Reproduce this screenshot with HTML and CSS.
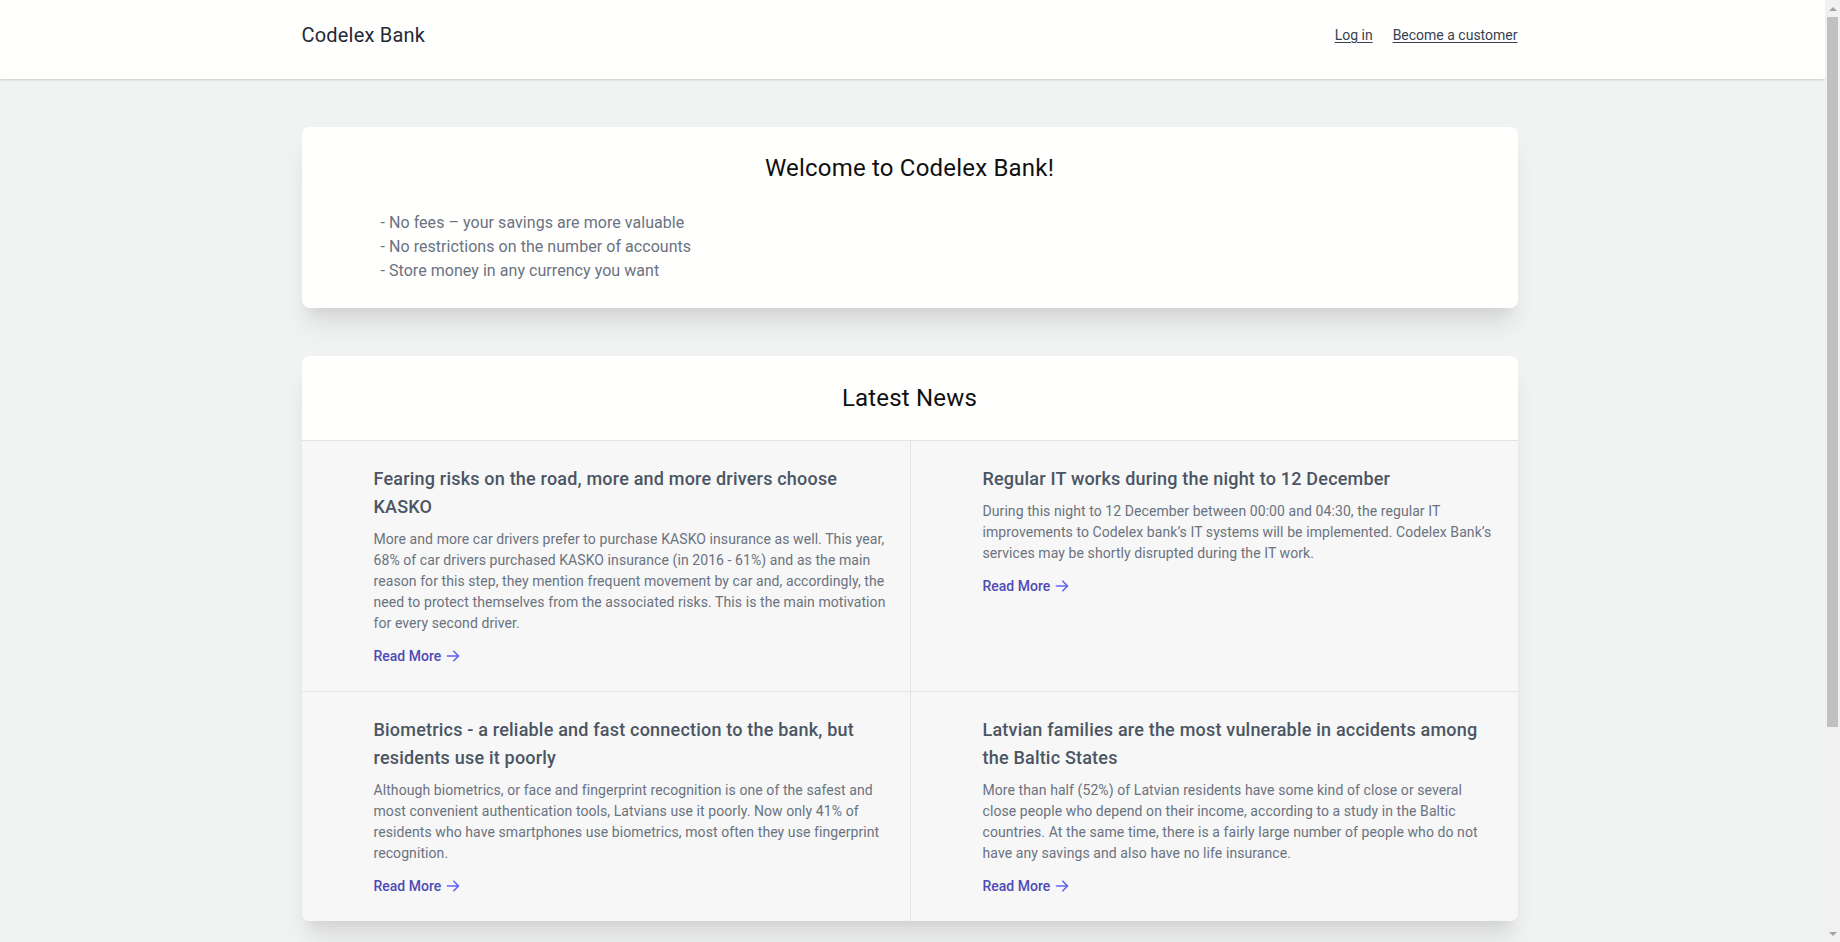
FILE: index.html
```html
<!DOCTYPE html>
<html lang="en">
<head>
<meta charset="utf-8">
<title>Codelex Bank</title>
<link rel="stylesheet" href="styles.css">
</head>
<body>
<div class="page">
<header class="topbar">
  <div class="container nav">
    <a class="brand" href="#">Codelex Bank</a>
    <div class="nav-links">
      <a href="#">Log in</a>
      <a href="#">Become a customer</a>
    </div>
  </div>
</header>

<main class="container main">
  <section class="card welcome">
    <h1 class="card-title">Welcome to Codelex Bank!</h1>
    <ul class="perks">
      <li>- No fees – your savings are more valuable</li>
      <li>- No restrictions on the number of accounts</li>
      <li>- Store money in any currency you want</li>
    </ul>
  </section>

  <section class="card news">
    <h2 class="card-title news-head">Latest News</h2>
    <div class="news-grid">
      <article class="news-item">
        <h3 class="news-title">Fearing risks on the road, more and more drivers choose KASKO</h3>
        <p class="news-text">More and more car drivers prefer to purchase KASKO insurance as well. This year, 68% of car drivers purchased KASKO insurance (in 2016 - 61%) and as the main reason for this step, they mention frequent movement by car and, accordingly, the need to protect themselves from the associated risks. This is the main motivation for every second driver.</p>
        <a class="read-more" href="#">Read More <svg viewBox="0 0 20 20" class="arrow"><path fill-rule="evenodd" clip-rule="evenodd" d="M10.293 3.293a1 1 0 011.414 0l6 6a1 1 0 010 1.414l-6 6a1 1 0 01-1.414-1.414L14.586 11H3a1 1 0 110-2h11.586l-4.293-4.293a1 1 0 010-1.414z"/></svg></a>
      </article>
      <article class="news-item right">
        <h3 class="news-title">Regular IT works during the night to 12 December</h3>
        <p class="news-text">During this night to 12 December between 00:00 and 04:30, the regular IT improvements to Codelex bank’s IT systems will be implemented. Codelex Bank’s services may be shortly disrupted during the IT work.</p>
        <a class="read-more" href="#">Read More <svg viewBox="0 0 20 20" class="arrow"><path fill-rule="evenodd" clip-rule="evenodd" d="M10.293 3.293a1 1 0 011.414 0l6 6a1 1 0 010 1.414l-6 6a1 1 0 01-1.414-1.414L14.586 11H3a1 1 0 110-2h11.586l-4.293-4.293a1 1 0 010-1.414z"/></svg></a>
      </article>
      <article class="news-item">
        <h3 class="news-title">Biometrics - a reliable and fast connection to the bank, but residents use it poorly</h3>
        <p class="news-text">Although biometrics, or face and fingerprint recognition is one of the safest and most convenient authentication tools, Latvians use it poorly. Now only 41% of residents who have smartphones use biometrics, most often they use fingerprint recognition.</p>
        <a class="read-more" href="#">Read More <svg viewBox="0 0 20 20" class="arrow"><path fill-rule="evenodd" clip-rule="evenodd" d="M10.293 3.293a1 1 0 011.414 0l6 6a1 1 0 010 1.414l-6 6a1 1 0 01-1.414-1.414L14.586 11H3a1 1 0 110-2h11.586l-4.293-4.293a1 1 0 010-1.414z"/></svg></a>
      </article>
      <article class="news-item right">
        <h3 class="news-title">Latvian families are the most vulnerable in accidents among the Baltic States</h3>
        <p class="news-text">More than half (52%) of Latvian residents have some kind of close or several close people who depend on their income, according to a study in the Baltic countries. At the same time, there is a fairly large number of people who do not have any savings and also have no life insurance.</p>
        <a class="read-more" href="#">Read More <svg viewBox="0 0 20 20" class="arrow"><path fill-rule="evenodd" clip-rule="evenodd" d="M10.293 3.293a1 1 0 011.414 0l6 6a1 1 0 010 1.414l-6 6a1 1 0 01-1.414-1.414L14.586 11H3a1 1 0 110-2h11.586l-4.293-4.293a1 1 0 010-1.414z"/></svg></a>
      </article>
    </div>
  </section>
</main>
</div>

<div class="scrollbar" aria-hidden="true">
  <div class="sb-btn sb-up"></div>
  <div class="sb-track"><div class="sb-thumb"></div></div>
  <div class="sb-btn sb-down"></div>
</div>
</body>
</html>
```
FILE: styles.css
```css
* { box-sizing: border-box; }
html, body { margin: 0; padding: 0; }
body {
  background: #f1f2f2;
  font-family: Roboto, "Noto Sans", sans-serif;
  color: #1f2937;
  -webkit-font-smoothing: antialiased;
}
.page {
  margin-right: 15px;
}
.container {
  max-width: 1280px;
  margin: 0 auto;
  padding: 0 35px 0 29px;
}
.topbar {
  background: #fffffd;
  height: 79px;
  box-shadow: 0 1px 3px 0 rgba(0,0,0,.1), 0 1px 2px 0 rgba(0,0,0,.06);
  position: relative;
}
.nav {
  height: 70px;
  display: flex;
  align-items: center;
  justify-content: space-between;
}
.brand {
  font-size: 20px;
  line-height: 28px;
  color: #1f2937;
  text-decoration: none;
  letter-spacing: 0.2px;
}
.nav-links { display: flex; gap: 20px; }
.nav-links a {
  font-size: 14px;
  line-height: 20px;
  color: #374151;
  text-decoration: underline;
  text-underline-offset: 2px;
}
.main {
  padding-top: 48px;
  padding-bottom: 48px;
}
.card {
  background: #fffffd;
  border-radius: 8px;
  overflow: hidden;
  box-shadow: 0 20px 25px -5px rgba(0,0,0,.1), 0 10px 10px -5px rgba(0,0,0,.04);
}
.card-title {
  margin: 0;
  font-size: 24px;
  line-height: 32px;
  font-weight: 400;
  color: #111;
  text-align: center;
  letter-spacing: 0.2px;
}
.welcome {
  padding: 25px 24px 25px;
  margin-bottom: 48px;
}
.perks {
  list-style: none;
  margin: 27px 0 0;
  padding: 0 0 0 55px;
}
.perks li {
  font-size: 16px;
  line-height: 24px;
  color: #6b7280;
  letter-spacing: 0.05px;
}
.news-head {
  padding: 26px 24px;
}
.news-grid {
  display: grid;
  grid-template-columns: 1fr 1fr;
  background: #f6f7f6;
}
.news-item {
  border-top: 1px solid #e3e5e5;
  padding: 24px 24px 25px 72px;
  display: flex;
  flex-direction: column;
  align-items: flex-start;
}
.news-item.right { border-left: 1px solid #e3e5e5; }
.news-title {
  margin: 0;
  font-size: 18px;
  line-height: 28px;
  font-weight: 500;
  color: #4b5563;
  letter-spacing: 0.2px;
}
.news-text {
  margin: 8px 0 0;
  font-size: 14px;
  line-height: 21px;
  color: #6b7280;
  letter-spacing: 0.08px;
}
.read-more {
  margin-top: 12px;
  display: inline-flex;
  align-items: center;
  font-size: 14px;
  line-height: 20px;
  font-weight: 500;
  color: #4f4ab5;
  text-decoration: none;
}
.arrow {
  width: 16px;
  height: 16px;
  margin-left: 4px;
  fill: #6366f1;
}

/* classic browser scrollbar drawn over the right edge */
.scrollbar {
  position: fixed;
  top: 0;
  right: 0;
  bottom: 0;
  width: 15px;
  background: #f1f1f1;
  display: flex;
  flex-direction: column;
}
.sb-btn {
  height: 17px;
  flex: none;
  display: flex;
  align-items: center;
  justify-content: center;
}
.sb-up::before, .sb-down::before {
  content: "";
  width: 0;
  height: 0;
  border-left: 4px solid transparent;
  border-right: 4px solid transparent;
}
.sb-up::before { border-bottom: 4px solid #a3a3a3; }
.sb-down::before { border-top: 4px solid #a3a3a3; }
.sb-track {
  flex: 1;
  padding: 0 2px;
}
.sb-thumb {
  height: 710px;
  background: #c1c1c1;
}
```
